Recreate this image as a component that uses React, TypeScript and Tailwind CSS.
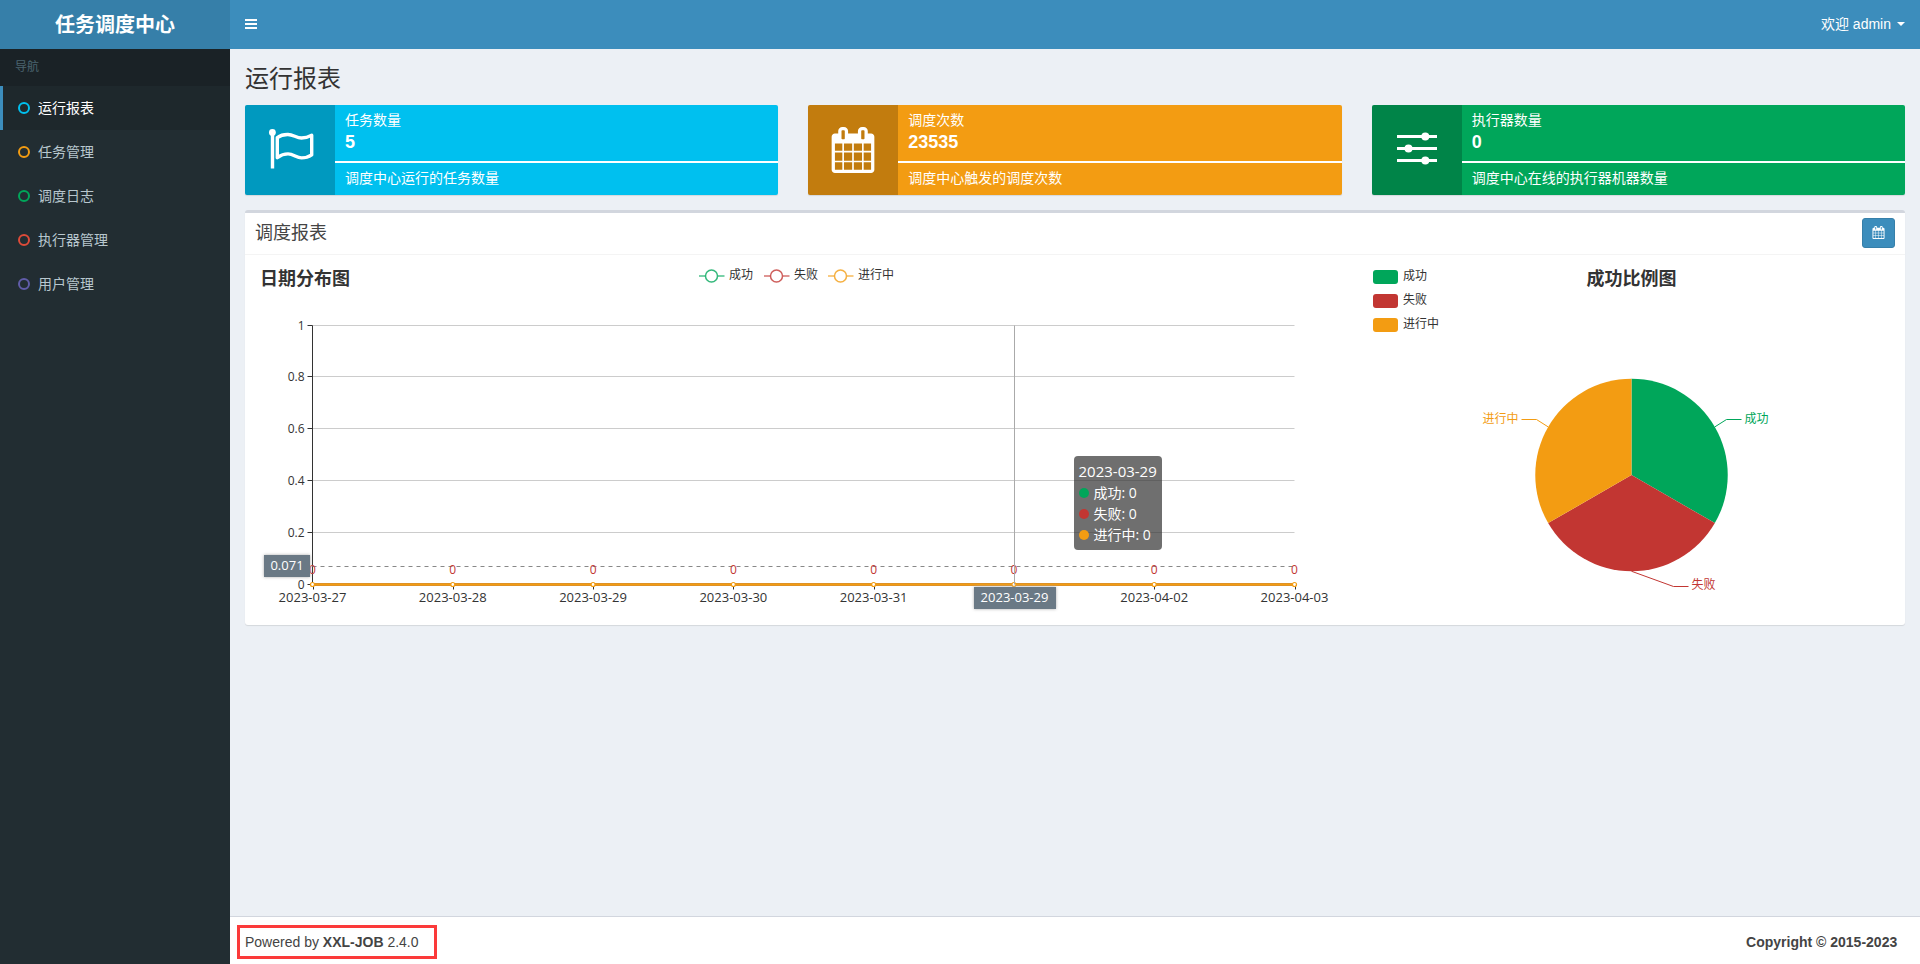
import React, { useLayoutEffect, useRef, useState } from 'react';
import { clsx } from 'clsx';

const GREEN = '#00a65a';
const RED = '#c23632';
const ORANGE = '#f39c12';

const series = [
  { name: '成功', color: GREEN, value: 0 },
  { name: '失败', color: RED, value: 0 },
  { name: '进行中', color: ORANGE, value: 0 },
];

const menu = [
  { label: '运行报表', color: 'text-[#00c0ef]' },
  { label: '任务管理', color: 'text-[#f39c12]' },
  { label: '调度日志', color: 'text-[#00a65a]' },
  { label: '执行器管理', color: 'text-[#dd4b39]' },
  { label: '用户管理', color: 'text-[#605ca8]' },
];

const days = [
  '2023-03-27',
  '2023-03-28',
  '2023-03-29',
  '2023-03-30',
  '2023-03-31',
  '2023-04-01',
  '2023-04-02',
  '2023-04-03',
];

const CHART_HEIGHT = 350;

// Follows the rendered width of a container so the charts can be redrawn.
function useWidth(initial: number) {
  const ref = useRef<HTMLDivElement>(null);
  const [width, setWidth] = useState(initial);

  useLayoutEffect(() => {
    const el = ref.current;
    if (!el) return;
    const update = () => setWidth(el.clientWidth);
    update();
    const observer = new ResizeObserver(update);
    observer.observe(el);
    return () => observer.disconnect();
  }, []);

  return { ref, width };
}

const FlagIcon = () => (
  <svg className="h-12 w-12" viewBox="0 0 48 48" fill="none" stroke="currentColor" strokeWidth="3.4" aria-hidden="true">
    <circle cx="6.4" cy="6.4" r="3.4" fill="currentColor" stroke="none" />
    <path d="M6.5 6v36.5" />
    <path d="M11.3 11.6c3-2.2 7-3.2 10.7-3.1 5.2.1 8.5 3.5 13.5 3.5 4 0 7-1 10.2-2.7v19.6c-3 2-6.4 3-10.2 3-5 0-8-4-13.500-4-4 0-7.700 1.600-10.700 3.800z" strokeLinejoin="round" />
  </svg>
);

const CalendarIcon = ({ className }: { className: string }) => (
  <svg className={className} viewBox="0 0 1792 1792" fill="currentColor" aria-hidden="true">
    <path d="M192 1664h288v-288h-288v288zM544 1664h320v-288h-320v288zM192 1312h288v-320h-288v320zM544 1312h320v-320h-320v320zM192 928h288v-288h-288v288zM928 1664h320v-288h-320v288zM544 928h320v-288h-320v288zM1312 1664h288v-288h-288v288zM928 1312h320v-320h-320v320zM576 448v-288q0-13-9.500-22.500t-22.500-9.500h-64q-13 0-22.500 9.500t-9.500 22.500v288q0 13 9.500 22.500t22.500 9.500h64q13 0 22.500-9.500t9.500-22.500zM1312 1312h288v-320h-288v320zM928 928h320v-288h-320v288zM1312 928h288v-288h-288v288zM1344 448v-288q0-13-9.500-22.500t-22.500-9.500h-64q-13 0-22.500 9.500t-9.500 22.500v288q0 13 9.500 22.500t22.500 9.500h64q13 0 22.500-9.500t9.500-22.500zM1728 384v1280q0 52-38 90t-90 38h-1408q-52 0-90-38t-38-90v-1280q0-52 38-90t90-38h128v-96q0-66 47-113t113-47h64q66 0 113 47t47 113v96h384v-96q0-66 47-113t113-47h64q66 0 113 47t47 113v96h128q52 0 90 38t38 90z" />
  </svg>
);

const SettingsIcon = () => (
  <svg className="h-12 w-12" viewBox="0 0 48 48" fill="currentColor" aria-hidden="true">
    <path d="M4 9h40v3H4zM4 21h40v3H4zM4 33h40v3H4z" />
    <circle cx="32.3" cy="10.5" r="4" />
    <circle cx="15.5" cy="22.5" r="4" />
    <circle cx="32.3" cy="34.5" r="4" />
  </svg>
);

type InfoBoxProps = {
  label: string;
  value: string;
  description: string;
  bg: string;
  icon: React.ReactNode;
};

const InfoBox = ({ label, value, description, bg, icon }: InfoBoxProps) => (
  <section className={clsx('flex h-[90px] overflow-hidden rounded-[2px] text-white shadow-[0_1px_1px_rgba(0,0,0,0.1)]', bg)}>
    <div className="flex w-[90px] shrink-0 items-center justify-center bg-black/20">{icon}</div>
    <div className="min-w-0 flex-1 pt-[5px] text-sm">
      <div className="px-[10px] leading-5">{label}</div>
      <div className="px-[10px] pb-[2px] text-lg leading-6 font-bold">{value}</div>
      <div className="my-[5px] h-[2px] bg-white" />
      <div className="truncate px-[10px] leading-5">{description}</div>
    </div>
  </section>
);

const LineChart = () => {
  const { ref, width } = useWidth(1083);
  const left = 57.5;
  const right = Math.round(width * 0.96) - 0.5;
  const top = 60.5;
  const bottom = 319.5;
  const step = (right - left) / (days.length - 1);
  const xOf = (i: number) => left + step * i;
  const yOf = (v: number) => bottom - (bottom - top) * v;
  const pointerIndex = 5;
  const pointerX = Math.round(xOf(pointerIndex)) + 0.5;
  const legendOffsets = [0, 65, 129];
  const legendX = Math.round(width / 2) - 98;

  return (
    <div ref={ref} className="relative font-['Open_Sans','Noto_Sans_CJK_SC',sans-serif]">
      <svg className="block h-[350px] w-full" role="img" aria-label="日期分布图">
        <text x="5" y="20" fontSize="18" fontWeight="bold" fill="#333">日期分布图</text>

        {series.map((s, i) => (
          <g key={s.name} transform={`translate(${legendX + legendOffsets[i]} 0)`}>
            <path d="M0 11h6.5M19 11h6.5" stroke={s.color} strokeOpacity="0.7" strokeWidth="1.6" />
            <circle cx="12.5" cy="11" r="6" fill="#fff" stroke={s.color} strokeOpacity="0.8" strokeWidth="1.5" />
            <text x="30" y="14" fontSize="12" fill="#333">{s.name}</text>
          </g>
        ))}

        {[0, 0.2, 0.4, 0.6, 0.8, 1].map((v) => {
          const y = Math.round(yOf(v)) - 0.5;
          return (
            <g key={v}>
              <path d={`M${left} ${y}H${right}`} stroke="#ccc" />
              <path d={`M${left - 5} ${y}h5`} stroke="#333" />
              <text x={left - 8} y={y + 4} fontSize="12" textAnchor="end" fill="#333">{v}</text>
            </g>
          );
        })}
        <path d={`M${left} ${top}V${bottom}`} stroke="#333" />

        {days.map((day, i) => (
          <g key={day}>
            <path d={`M${Math.round(xOf(i)) + 0.5} ${bottom}v5`} stroke="#333" />
            {i !== pointerIndex && (
              <text x={xOf(i)} y="337" fontSize="13" textAnchor="middle" fill="#333">{day}</text>
            )}
          </g>
        ))}

        <path d={`M${left} 301.5H${right}`} stroke="#888" strokeDasharray="4 4" />
        {days.map((day, i) => (
          <text key={day} x={xOf(i)} y="309" fontSize="12" textAnchor="middle" fill={RED}>0</text>
        ))}
        <path d={`M${left} ${bottom}H${right}`} stroke="#c9883a" strokeWidth="3" />
        <path d={`M${left} ${bottom}H${right}`} stroke={ORANGE} strokeWidth="2" />
        {days.map((day, i) => (
          <circle key={day} cx={xOf(i)} cy={bottom} r="2" fill="#fff" stroke={ORANGE} strokeWidth="1.2" />
        ))}
        <path d={`M${pointerX} ${top}V${bottom}`} stroke="#aaa" />
      </svg>

      {/* axis pointer labels */}
      <div className="absolute top-[290px] left-[9px] w-[46px] bg-[#6a7985] pt-[2px] pb-1 text-center text-[13px] leading-4 text-white shadow-[0_0_3px_#aaa]">
        0.071
      </div>
      <div
        className="absolute top-[322px] w-[82px] -translate-x-1/2 bg-[#6a7985] pt-[2px] pb-1 text-center text-[13px] leading-4 text-white shadow-[0_0_3px_#aaa]"
        style={{ left: pointerX }}
      >
        2023-03-29
      </div>

      <div
        className="absolute top-[191px] w-[88px] rounded-[4px] bg-[rgba(50,50,50,0.7)] p-[5px] text-sm leading-[21px] whitespace-nowrap text-white"
        style={{ left: pointerX + 59 }}
      >
        <div className="text-[15px] leading-[21px]">2023-03-29</div>
        {series.map((s) => (
          <div key={s.name} className="flex items-center gap-[5px]">
            <span className="h-[10px] w-[10px] rounded-full" style={{ backgroundColor: s.color }} />
            <span>{s.name}: {s.value}</span>
          </div>
        ))}
      </div>
    </div>
  );
};

const PieChart = () => {
  const { ref, width } = useWidth(527);
  const cx = width / 2;
  const cy = CHART_HEIGHT * 0.6;

  return (
    <div ref={ref} className="font-['Open_Sans','Noto_Sans_CJK_SC',sans-serif]">
      <svg className="block h-[350px] w-full" role="img" aria-label="成功比例图">
        {series.map((s, i) => (
          <g key={s.name}>
            <rect x="5" y={5 + i * 24} width="25" height="14" rx="3" fill={s.color} />
            <text x="35" y={15 + i * 24} fontSize="12" fill="#333">{s.name}</text>
          </g>
        ))}
        <text x={cx} y="20" fontSize="18" fontWeight="bold" textAnchor="middle" fill="#333">成功比例图</text>

        <g transform={`translate(${cx} ${cy})`} fontSize="12">
          <path d="M0 0V-96.25A96.25 96.25 0 0 1 83.35 48.12z" fill={GREEN} />
          <path d="M0 0L83.35 48.12A96.25 96.25 0 0 1 -83.35 48.12z" fill={RED} />
          <path d="M0 0L-83.35 48.12A96.25 96.25 0 0 1 0 -96.25z" fill={ORANGE} />
          <path d="M83.35 -48.12L95 -55.5H110" fill="none" stroke={GREEN} />
          <path d="M0 96.25L42 111.5H57" fill="none" stroke={RED} />
          <path d="M-83.35 -48.12L-95 -55.5H-110" fill="none" stroke={ORANGE} />
          <text x="113" y="-52" fill={GREEN}>成功</text>
          <text x="60" y="114" fill={RED}>失败</text>
          <text x="-113" y="-52" textAnchor="end" fill={ORANGE}>进行中</text>
        </g>
      </svg>
    </div>
  );
};

const App: React.FC = () => {
  const [collapsed, setCollapsed] = useState(false);
  const [active, setActive] = useState('运行报表');

  return (
    <div className="flex min-h-screen bg-[#ecf0f5] font-['Liberation_Sans','Noto_Sans_CJK_SC',sans-serif] text-sm text-[#333]">
      {!collapsed && (
        <aside className="w-[230px] shrink-0 bg-[#222d32]">
          <a href="#" className="flex h-[49px] items-center justify-center bg-[#367fa9] text-xl font-bold text-white">
            任务调度中心
          </a>
          <nav>
            <div className="bg-[#1a2226] px-[15px] py-[10px] text-xs leading-[17px] text-[#4b646f]">导航</div>
            <ul>
              {menu.map((item) => (
                <li key={item.label}>
                  <a
                    href="#"
                    onClick={() => setActive(item.label)}
                    className={clsx(
                      'flex h-11 items-center gap-2 border-l-[3px] pl-[15px]',
                      active === item.label
                        ? 'border-[#3c8dbc] bg-[#1e282c] text-white'
                        : 'border-transparent text-[#b8c7ce]'
                    )}
                  >
                    <svg className={clsx('h-3 w-3', item.color)} viewBox="0 0 12 12" fill="none" stroke="currentColor" strokeWidth="2" aria-hidden="true">
                      <circle cx="6" cy="6" r="5" />
                    </svg>
                    <span>{item.label}</span>
                  </a>
                </li>
              ))}
            </ul>
          </nav>
        </aside>
      )}

      <div className="flex min-w-0 flex-1 flex-col">
        <header className="flex h-[49px] items-center justify-between bg-[#3c8dbc] px-[15px] pb-[2px] text-white">
          <button type="button" aria-label="切换导航" onClick={() => setCollapsed(!collapsed)}>
            <svg className="h-[10px] w-3" viewBox="0 0 12 10" fill="currentColor" aria-hidden="true">
              <path d="M0 0h12v2H0zM0 4h12v2H0zM0 8h12v2H0z" />
            </svg>
          </button>
          <button type="button" className="flex items-center gap-[6px]">
            <span>欢迎 admin</span>
            <svg className="h-1 w-2" viewBox="0 0 8 4" fill="currentColor" aria-hidden="true">
              <path d="M0 0h8L4 4z" />
            </svg>
          </button>
        </header>

        <main className="flex-1 p-[15px]">
          <h1 className="pb-3 text-2xl leading-[29px]">运行报表</h1>

          <div className="grid grid-cols-3 gap-x-[30px]">
            <InfoBox
              label="任务数量"
              value="5"
              description="调度中心运行的任务数量"
              bg="bg-[#00c0ef]"
              icon={<FlagIcon />}
            />
            <InfoBox
              label="调度次数"
              value="23535"
              description="调度中心触发的调度次数"
              bg="bg-[#f39c12]"
              icon={<CalendarIcon className="h-[46px] w-[46px]" />}
            />
            <InfoBox
              label="执行器数量"
              value="0"
              description="调度中心在线的执行器机器数量"
              bg="bg-[#00a65a]"
              icon={<SettingsIcon />}
            />
          </div>

          <section className="mt-[15px] rounded-[3px] border-t-[3px] border-[#d2d6de] bg-white shadow-[0_1px_1px_rgba(0,0,0,0.1)]">
            <div className="flex h-[42px] items-center justify-between border-b border-[#f4f4f4] px-[10px] pb-[2px] text-[#444]">
              <h3 className="text-lg leading-5">调度报表</h3>
              <button
                type="button"
                aria-label="选择日期"
                className="flex h-[30px] w-[33px] items-center justify-center rounded-[3px] border border-[#367fa9] bg-[#3c8dbc] text-white"
              >
                <CalendarIcon className="h-[13px] w-[13px]" />
              </button>
            </div>
            <div className="grid grid-cols-3 gap-x-[30px] p-[10px]">
              <div className="col-span-2 min-w-0">
                <LineChart />
              </div>
              <div className="min-w-0">
                <PieChart />
              </div>
            </div>
          </section>
        </main>

        <footer className="relative flex justify-between border-t border-[#d2d6de] bg-white px-[15px] pt-[15px] pb-3 leading-5 text-[#444]">
          <div>
            Powered by <b>XXL-JOB</b> 2.4.0
          </div>
          <b>Copyright © 2015-2023 &nbsp;</b>
          <div className="pointer-events-none absolute top-2 left-[7px] h-[34px] w-[200px] border-[3px] border-[#fb3a3a]" />
        </footer>
      </div>
    </div>
  );
};

export default App;
